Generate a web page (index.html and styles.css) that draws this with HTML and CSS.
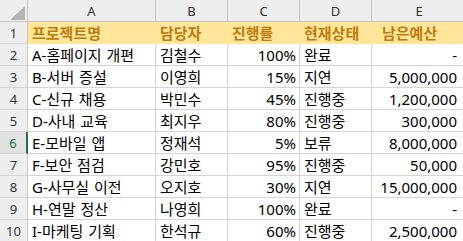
FILE: index.html
```html
<!DOCTYPE html>
<html lang="ko">
<head>
<meta charset="utf-8">
<title>Sheet</title>
<link rel="stylesheet" href="styles.css">
</head>
<body>
<div class="sheet">
  <div class="corner"><span class="tri"></span></div>
  <div class="colh">A</div>
  <div class="colh">B</div>
  <div class="colh">C</div>
  <div class="colh">D</div>
  <div class="colh last">E</div>

  <div class="rowh">1</div>
  <div class="cell hdr">프로젝트명</div>
  <div class="cell hdr">담당자</div>
  <div class="cell hdr">진행률</div>
  <div class="cell hdr">현재상태</div>
  <div class="cell hdr acc">남은예산</div>

  <div class="rowh">2</div>
  <div class="cell">A-홈페이지 개편</div>
  <div class="cell">김철수</div>
  <div class="cell num">100%</div>
  <div class="cell">완료</div>
  <div class="cell num acc">-</div>

  <div class="rowh">3</div>
  <div class="cell">B-서버 증설</div>
  <div class="cell">이영희</div>
  <div class="cell num">15%</div>
  <div class="cell">지연</div>
  <div class="cell num acc">5,000,000</div>

  <div class="rowh">4</div>
  <div class="cell">C-신규 채용</div>
  <div class="cell">박민수</div>
  <div class="cell num">45%</div>
  <div class="cell">진행중</div>
  <div class="cell num acc">1,200,000</div>

  <div class="rowh">5</div>
  <div class="cell">D-사내 교육</div>
  <div class="cell">최지우</div>
  <div class="cell num">80%</div>
  <div class="cell">진행중</div>
  <div class="cell num acc">300,000</div>

  <div class="rowh active">6</div>
  <div class="cell">E-모바일 앱</div>
  <div class="cell">정재석</div>
  <div class="cell num">5%</div>
  <div class="cell">보류</div>
  <div class="cell num acc">8,000,000</div>

  <div class="rowh">7</div>
  <div class="cell">F-보안 점검</div>
  <div class="cell">강민호</div>
  <div class="cell num">95%</div>
  <div class="cell">진행중</div>
  <div class="cell num acc">50,000</div>

  <div class="rowh">8</div>
  <div class="cell">G-사무실 이전</div>
  <div class="cell">오지호</div>
  <div class="cell num">30%</div>
  <div class="cell">지연</div>
  <div class="cell num acc">15,000,000</div>

  <div class="rowh">9</div>
  <div class="cell">H-연말 정산</div>
  <div class="cell">나영희</div>
  <div class="cell num">100%</div>
  <div class="cell">완료</div>
  <div class="cell num acc">-</div>

  <div class="rowh">10</div>
  <div class="cell">I-마케팅 기획</div>
  <div class="cell">한석규</div>
  <div class="cell num">60%</div>
  <div class="cell">진행중</div>
  <div class="cell num acc">2,500,000</div>
</div>
</body>
</html>
```
FILE: styles.css
```css
html, body {
  margin: 0;
  padding: 0;
  background: #ffffff;
  overflow: hidden;
}

.sheet {
  display: grid;
  grid-template-columns: 28px 128px 72px 72px 72px 95px;
  grid-auto-rows: 22px;
  font-family: "Noto Sans", "Noto Sans CJK KR", sans-serif;
  font-size: 15px;
  color: #000000;
}

.sheet > div {
  box-sizing: border-box;
  border-right: 1px solid #d4d4d4;
  border-bottom: 1px solid #d4d4d4;
  display: flex;
  align-items: center;
  white-space: nowrap;
  overflow: hidden;
}

.corner {
  position: relative;
  background: #eeeeee;
  border-right-color: #c6c6c6 !important;
  border-bottom-color: #c6c6c6 !important;
}

.tri {
  position: absolute;
  left: 10px;
  top: 6px;
  width: 15px;
  height: 14px;
  background: #b4b4b4;
  clip-path: polygon(100% 0, 100% 100%, 0 100%);
}

.colh {
  background: #eeeeee;
  justify-content: center;
  font-size: 13px;
  color: #333333;
  border-right-color: #c6c6c6 !important;
  border-bottom-color: #c6c6c6 !important;
}

.rowh {
  background: #eeeeee;
  justify-content: center;
  font-size: 13px;
  color: #333333;
  border-right-color: #c6c6c6 !important;
  border-bottom-color: #d4d4d4 !important;
}

.rowh.active {
  background: #e2e2e2;
  color: #217346;
  border-right: 2px solid #217346 !important;
}

.cell {
  padding: 0 3px 0 4px;
  word-spacing: 1px;
}

.cell.hdr {
  background: #ffe699;
  color: #c07b10;
  font-weight: 700;
  border-right-color: #ffe699 !important;
  border-bottom-color: #ffe699 !important;
}

.cell.hdr.acc {
  padding-left: 10px;
}

.cell.num {
  justify-content: flex-end;
}

.cell.num.acc {
  padding-right: 9px;
}
```
